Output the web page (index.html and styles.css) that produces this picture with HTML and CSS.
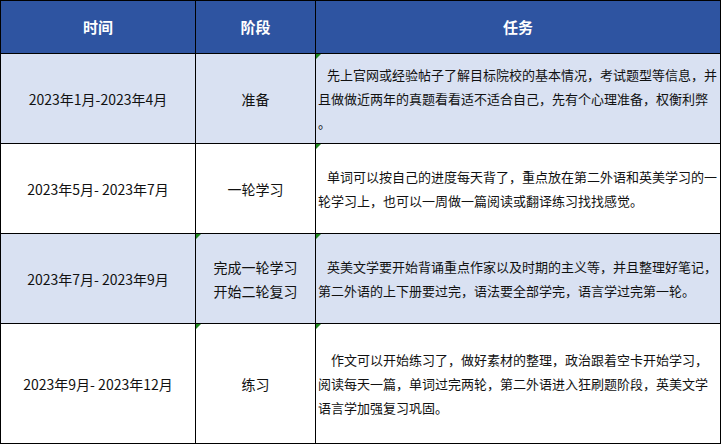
FILE: index.html
```html
<!DOCTYPE html>
<html lang="zh-CN">
<head>
<meta charset="utf-8">
<link rel="stylesheet" href="styles.css">
</head>
<body>
<div class="table">
  <div class="cell head">时间</div>
  <div class="cell head">阶段</div>
  <div class="cell head">任务</div>

  <div class="cell alt">2023年1月-2023年4月</div>
  <div class="cell alt">准备</div>
  <div class="cell alt task mark"><p class="ind1">先上官网或经验帖子了解目标院校的基本情况，考试题型等信息，并<br>且做做近两年的真题看看适不适合自己，先有个心理准备，权衡利弊<br>。</p></div>

  <div class="cell">2023年5月- 2023年7月</div>
  <div class="cell">一轮学习</div>
  <div class="cell task mark"><p class="ind1">单词可以按自己的进度每天背了，重点放在第二外语和英美学习的一<br>轮学习上，也可以一周做一篇阅读或翻译练习找找感觉。</p></div>

  <div class="cell alt">2023年7月- 2023年9月</div>
  <div class="cell alt mark two"><p>完成一轮学习<br>开始二轮复习</p></div>
  <div class="cell alt task mark"><p class="ind1">英美文学要开始背诵重点作家以及时期的主义等，并且整理好笔记，<br>第二外语的上下册要过完，语法要全部学完，语言学过完第一轮。</p></div>

  <div class="cell">2023年9月- 2023年12月</div>
  <div class="cell mark">练习</div>
  <div class="cell task mark"><p class="ind2">作文可以开始练习了，做好素材的整理，政治跟着空卡开始学习，<br>阅读每天一篇，单词过完两轮，第二外语进入狂刷题阶段，英美文学<br>语言学加强复习巩固。</p></div>
</div>
</body>
</html>
```
FILE: styles.css
```css
html, body {
  margin: 0;
  padding: 0;
  background: #ffffff;
}
.table {
  display: grid;
  width: 721px;
  height: 444px;
  box-sizing: border-box;
  padding: 1px;
  gap: 1px;
  background: #000000;
  grid-template-columns: 194px 119px 404px;
  grid-template-rows: 52px 89px 89px 89px 119px;
  font-family: "Noto Sans CJK SC", "Microsoft YaHei", sans-serif;
  font-size: 14px;
  color: #111111;
}
.cell {
  position: relative;
  background: #ffffff;
  display: flex;
  align-items: center;
  justify-content: center;
  text-align: center;
  line-height: 24px;
}
.cell p {
  margin: 0;
}
.head {
  background: #2e54a1;
  color: #ffffff;
  font-weight: bold;
  font-size: 15px;
}
.alt {
  background: #d9e1f2;
}
.task {
  justify-content: flex-start;
  text-align: left;
  padding-left: 2px;
  font-size: 13px;
  white-space: nowrap;
}
.ind1 {
  text-indent: 9px;
}
.ind2 {
  text-indent: 13px;
}
.mark::before {
  content: "";
  position: absolute;
  left: 0;
  top: 0;
  width: 0;
  height: 0;
  border-top: 5px solid #1f8a1f;
  border-right: 5px solid transparent;
}
```
